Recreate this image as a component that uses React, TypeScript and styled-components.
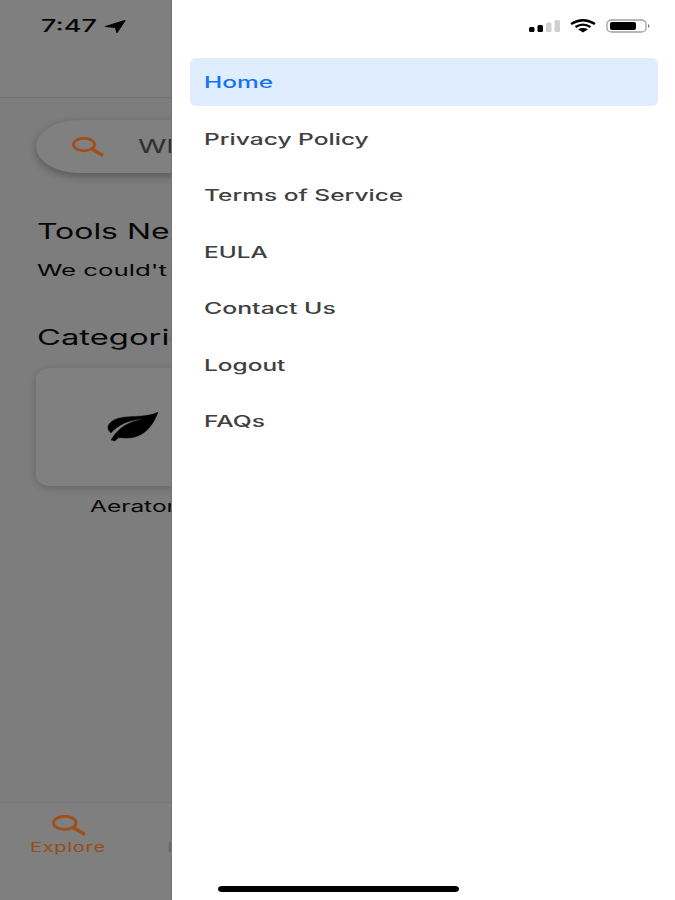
import React from "react";
import styled, { createGlobalStyle } from "styled-components";

const GlobalStyle = createGlobalStyle`
  * { box-sizing: border-box; }
  body { margin: 0; background: #fff; }
`;

const Screen = styled.div`
  display: flex;
  width: 675px;
  height: 900px;
  overflow: hidden;
  background: #fff;
  font-family: Inter, "Liberation Sans", sans-serif;
`;

const Dimmed = styled.main`
  display: flex;
  flex-direction: column;
  flex: none;
  width: 172px;
  overflow: hidden;
  background: #7d7d7d;
  border-right: 1px solid #747474;
  color: #060606;
  white-space: nowrap;
`;

/* Wide lettering: the glyphs are stretched horizontally from their left edge. */
const Label = styled.span<{
  $size: number;
  $stretch?: number;
  $weight?: number;
  $spacing?: number;
}>`
  display: block;
  width: max-content;
  font-size: ${(p) => p.$size}px;
  line-height: 24px;
  font-weight: ${(p) => p.$weight ?? 400};
  letter-spacing: ${(p) => p.$spacing ?? 0}px;
  transform: scaleX(${(p) => p.$stretch ?? 1.62});
  transform-origin: left center;
  white-space: nowrap;
`;

const Header = styled.header`
  display: flex;
  flex: none;
  align-items: flex-start;
  height: 98px;
  padding: 14px 0 0 41px;
  background: #7f7f7f;
  border-bottom: 1px solid #727272;
`;

const Clock = styled.div`
  width: 64px;
  flex: none;
`;

const Arrow = styled.svg`
  flex: none;
  width: 21px;
  height: 14px;
  margin-top: 6px;
  overflow: visible;
`;

const SearchBar = styled.div`
  display: flex;
  flex: none;
  align-items: center;
  width: 320px;
  height: 53px;
  margin: 22px 0 0 36px;
  padding-left: 36px;
  border-radius: 44px / 27px;
  background: #808080;
  box-shadow: 0 3px 8px rgba(0, 0, 0, 0.3);
  color: #303030;
`;

const SearchIcon = styled.svg`
  flex: none;
  width: 32px;
  height: 20px;
  margin-right: 34px;
`;

const Section = styled.section`
  flex: none;
  padding-left: 37px;
`;

const Tools = styled(Section)`
  height: 109px;
  padding-top: 47px;
`;

const Subtitle = styled.div`
  margin-top: 14px;
`;

const Categories = styled(Section)`
  height: 86px;
  padding-top: 44px;
`;

const Card = styled.div`
  flex: none;
  width: 190px;
  height: 118px;
  margin-left: 36px;
  padding: 44px 0 0 71px;
  border-radius: 15px / 10px;
  background: #808080;
  box-shadow: 0 2px 8px rgba(0, 0, 0, 0.2);
`;

const Leaf = styled.svg`
  display: block;
  width: 52px;
  height: 30px;
`;

const Caption = styled.div`
  flex: none;
  padding: 8px 0 0 90px;
`;

const TabBar = styled.nav`
  display: flex;
  flex: none;
  gap: 61px;
  height: 98px;
  margin-top: auto;
  border-top: 1px solid #777;
  background: #7f7f7f;
  color: #994a14;
`;

const Tab = styled.div`
  flex: none;
  width: 106px;
  padding: 12px 0 0 30px;
`;

const TabIcon = styled.svg`
  display: block;
  width: 34px;
  height: 21px;
  margin: 0 0 -1px 22px;
`;

const NextTab = styled.div`
  padding-top: 32px;
  color: #666;
`;

const Drawer = styled.aside`
  display: flex;
  flex: 1;
  flex-direction: column;
  background: #fff;
`;

const StatusBar = styled.div`
  display: flex;
  align-items: flex-start;
  justify-content: flex-end;
  gap: 9px;
  height: 58px;
  padding: 19px 24px 0 0;
`;

const StatusIcon = styled.svg<{ $w: number }>`
  flex: none;
  width: ${(p) => p.$w}px;
  height: 15px;
`;

const Menu = styled.nav`
  display: flex;
  flex-direction: column;
  gap: 8.5px;
  padding: 0 17px 0 18px;
`;

const MenuItem = styled.a<{ $active?: boolean }>`
  display: flex;
  align-items: center;
  height: 48px;
  padding: 2px 0 0 14px;
  border-radius: 7px / 5px;
  background: ${(p) => (p.$active ? "#e0edff" : "transparent")};
  color: ${(p) => (p.$active ? "#1573f5" : "#404040")};
`;

const HomeIndicator = styled.div`
  width: 241px;
  height: 6px;
  margin: auto 0 8px 46px;
  border-radius: 4px / 3px;
  background: #000;
`;

const items = [
  { text: "Home", stretch: 1.58 },
  { text: "Privacy Policy", stretch: 1.585 },
  { text: "Terms of Service", stretch: 1.58 },
  { text: "EULA", stretch: 1.57 },
  { text: "Contact Us", stretch: 1.6 },
  { text: "Logout", stretch: 1.575 },
  { text: "FAQs", stretch: 1.59 },
];

const Magnifier = () => (
  <g fill="none" stroke="#a04f18">
    <ellipse cx="12" cy="7.500" rx="10.600" ry="6.300" strokeWidth="2.700" />
    <path d="M20 12L31 18.500" strokeWidth="3.300" />
  </g>
);

export default function App() {
  return (
    <>
      <GlobalStyle />
      <Screen>
        <Dimmed>
          <Header>
            <Clock>
              <Label $size={17} $weight={550} $stretch={1.59}>7:47</Label>
            </Clock>
            <Arrow viewBox="0 0 21 14">
              <path d="M20 .5L12 12.500L10.500 7.500L.5 6.500Z" fill="#000" stroke="#000" strokeLinejoin="round" strokeWidth="1.200" />
            </Arrow>
          </Header>
          <SearchBar>
            <SearchIcon viewBox="0 0 32 20" preserveAspectRatio="none"><Magnifier /></SearchIcon>
            <Label $size={19} $stretch={1.52}>What</Label>
          </SearchBar>
          <Tools>
            <Label $size={21} $stretch={1.52}>Tools Near</Label>
            <Subtitle>
              <Label $size={16} $stretch={1.61}>We could't find</Label>
            </Subtitle>
          </Tools>
          <Categories>
            <Label $size={21} $stretch={1.56}>Categories</Label>
          </Categories>
          <Card>
            <Leaf viewBox="0 0 52 30">
              <path d="M51 0C47 12 38 25 22 26C17 26.500 14 25 11 26L8 29L4 28L8 22C16 13 23 10 36 7C22 8 12 12 4 21C-1 17 0 12 7 8C18 2 38 7 51 0Z" fill="#000" stroke="#000" strokeWidth=".4" />
            </Leaf>
          </Card>
          <Caption>
            <Label $size={16} $stretch={1.53}>Aerators</Label>
          </Caption>
          <TabBar>
            <Tab>
              <TabIcon viewBox="0 0 32 20" preserveAspectRatio="none"><Magnifier /></TabIcon>
              <Label $size={13} $stretch={1.53} $spacing={0.5}>Explore</Label>
            </Tab>
            <NextTab>
              <Label $size={13}>My</Label>
            </NextTab>
          </TabBar>
        </Dimmed>
        <Drawer>
          <StatusBar>
            <StatusIcon $w={32} viewBox="0 0 32 15">
              <rect x="0" y="8" width="5.500" height="5" rx="1.500" />
              <rect x="8.500" y="6" width="5.500" height="7" rx="1.500" />
              <rect x="17" y="3.500" width="5.500" height="9.500" rx="1.500" fill="#d0d0d0" />
              <rect x="25.500" y="1" width="5.500" height="12" rx="1.500" fill="#d0d0d0" />
            </StatusIcon>
            <StatusIcon $w={27} viewBox="0 0 27 15">
              <path d="M1 5Q13 -2.500 25 5M5.500 8Q13 3.200 20.500 8" fill="none" stroke="#000" strokeWidth="2.300" />
              <path d="M8 10.200Q13 8 18 10.200L13 13.500Z" />
            </StatusIcon>
            <StatusIcon $w={45} viewBox="0 0 45 15">
              <rect x="1" y="1" width="39" height="12" rx="5" ry="3.500" fill="none" stroke="#a0a0a0" strokeWidth="1.300" />
              <rect x="4" y="3" width="26" height="8" rx="2" />
              <path d="M42 5Q45 7 42 9Z" fill="#777" />
            </StatusIcon>
          </StatusBar>
          <Menu>
            {items.map((item, i) => (
              <MenuItem key={item.text} $active={i === 0}>
                <Label $size={15.5} $weight={i === 0 ? 500 : 450} $stretch={item.stretch}>{item.text}</Label>
              </MenuItem>
            ))}
          </Menu>
          <HomeIndicator />
        </Drawer>
      </Screen>
    </>
  );
}
